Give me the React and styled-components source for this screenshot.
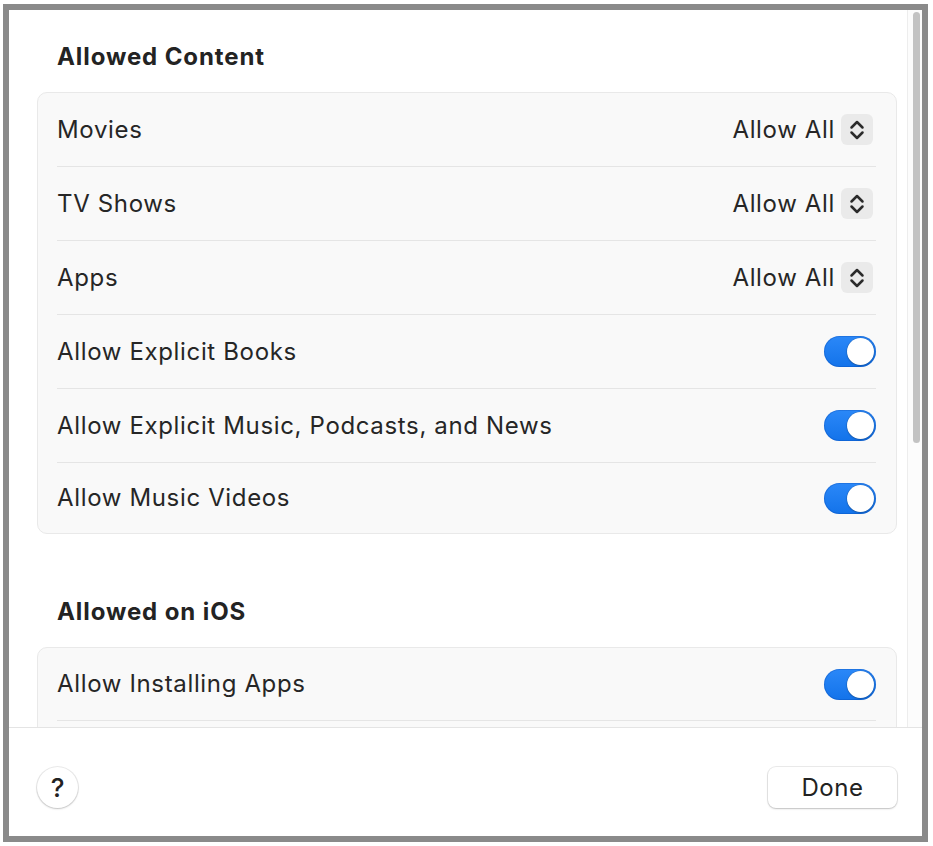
import React from "react";
import styled, { createGlobalStyle } from "styled-components";

const GlobalStyle = createGlobalStyle`
  html, body {
    margin: 0;
    padding: 0;
    background: #ffffff;
  }
  body {
    font-family: Inter, "Noto Sans", "Liberation Sans", sans-serif;
    color: #262626;
    -webkit-font-smoothing: antialiased;
  }
`;

const contentRows = [
  { label: "Movies", kind: "popup", value: "Allow All" },
  { label: "TV Shows", kind: "popup", value: "Allow All" },
  { label: "Apps", kind: "popup", value: "Allow All" },
  { label: "Allow Explicit Books", kind: "toggle" },
  { label: "Allow Explicit Music, Podcasts, and News", kind: "toggle" },
  { label: "Allow Music Videos", kind: "toggle" },
];

// the list goes on below the footer, only the first row is visible
const iosRows = [{ label: "Allow Installing Apps", kind: "toggle" }];

function Stepper() {
  return (
    <StepperBox>
      <svg width="22" height="24" viewBox="0 0 22 24" fill="none">
        <path
          d="M5.5 9.5 L11 4 L16.5 9.5 M5.5 14.5 L11 20 L16.5 14.5"
          stroke="#2b2b2b"
          strokeWidth="2.5"
          strokeLinecap="round"
          strokeLinejoin="round"
        />
      </svg>
    </StepperBox>
  );
}

function Row({ row }) {
  return (
    <RowWrap>
      <RowLabel>{row.label}</RowLabel>
      {row.kind === "popup" ? (
        <Popup>
          <PopupValue>{row.value}</PopupValue>
          <Stepper />
        </Popup>
      ) : (
        <Toggle>
          <Knob />
        </Toggle>
      )}
    </RowWrap>
  );
}

function Section({ title, rows, continues }) {
  return (
    <SectionWrap>
      <SectionTitle>{title}</SectionTitle>
      <Card $continues={continues}>
        {rows.map((r) => (
          <Row key={r.label} row={r} />
        ))}
      </Card>
    </SectionWrap>
  );
}

export default function App() {
  return (
    <>
      <GlobalStyle />
      <Frame>
        <ScrollArea>
          <Content>
            <Section title="Allowed Content" rows={contentRows} />
            <Section title="Allowed on iOS" rows={iosRows} continues />
          </Content>
          <ScrollTrack>
            <Thumb />
          </ScrollTrack>
        </ScrollArea>
        <Footer>
          <HelpButton>?</HelpButton>
          <DoneButton>Done</DoneButton>
        </Footer>
      </Frame>
    </>
  );
}

const Frame = styled.div`
  box-sizing: border-box;
  margin: 4px 5px 0 3px;
  height: 838px;
  border: 6px solid #8a8a8a;
  background: #ffffff;
  display: flex;
  flex-direction: column;
  overflow: hidden;
`;

const ScrollArea = styled.div`
  flex: 1;
  display: flex;
  min-height: 0;
  overflow: hidden;
`;

const Content = styled.div`
  flex: 1;
  padding: 32px 10px 0 28px;
  display: flex;
  flex-direction: column;
  gap: 63px;
`;

const ScrollTrack = styled.div`
  width: 14px;
  border-left: 1px solid #ededed;
  background: #fcfcfc;
  padding-top: 2px;
`;

const Thumb = styled.div`
  width: 7px;
  height: 431px;
  margin-left: 5px;
  border-radius: 4px;
  background: #c3c3c3;
`;

const SectionWrap = styled.section`
  display: flex;
  flex-direction: column;
  gap: 20px;
`;

const SectionTitle = styled.h2`
  margin: 0;
  padding-left: 20px;
  font-size: 24px;
  line-height: 30px;
  font-weight: 700;
  color: #232323;
  letter-spacing: 0.9px;
`;

const Card = styled.div`
  background: #f9f9f9;
  border: 1px solid #e9e9e9;
  border-radius: 10px;
  padding: 0 20px ${(p) => (p.$continues ? "60px" : "0")} 19px;

  & > div:last-child {
    border-bottom: ${(p) => (p.$continues ? "1px solid #e5e5e5" : "none")};
    height: ${(p) => (p.$continues ? "73px" : "70px")};
  }
`;

const RowWrap = styled.div`
  height: 74px;
  display: flex;
  align-items: center;
  justify-content: space-between;
  border-bottom: 1px solid #e5e5e5;
  box-sizing: border-box;
`;

const RowLabel = styled.span`
  font-size: 24px;
  line-height: 30px;
  color: #262626;
  letter-spacing: 0.65px;
`;

const Popup = styled.div`
  display: flex;
  align-items: center;
  gap: 6px;
  margin-right: 3px;
`;

const PopupValue = styled.span`
  font-size: 24px;
  line-height: 30px;
  color: #262626;
  letter-spacing: 0.65px;
`;

const StepperBox = styled.div`
  width: 32px;
  height: 31px;
  border-radius: 6px;
  background: #eaeaea;
  display: flex;
  align-items: center;
  justify-content: center;
`;

const Toggle = styled.div`
  box-sizing: border-box;
  width: 52px;
  height: 31px;
  border-radius: 16px;
  background: linear-gradient(180deg, #2b88f8 0%, #1373ea 100%);
  box-shadow: inset 0 0 0 1px rgba(0, 60, 160, 0.25);
  display: flex;
  align-items: center;
  justify-content: flex-end;
  padding: 0 2px;
`;

const Knob = styled.div`
  width: 27px;
  height: 27px;
  border-radius: 50%;
  background: #ffffff;
  box-shadow: 0 0 0 0.5px rgba(0, 0, 0, 0.15), 0 1px 2px rgba(0, 0, 0, 0.2);
`;

const Footer = styled.footer`
  height: 109px;
  box-sizing: border-box;
  border-top: 1px solid #e4e4e4;
  padding: 39px 25px 28px 28px;
  display: flex;
  align-items: flex-start;
  justify-content: space-between;
  background: #ffffff;
`;

const HelpButton = styled.button`
  width: 41px;
  height: 41px;
  border-radius: 50%;
  border: none;
  background: #ffffff;
  box-shadow: 0 0 0 1px rgba(0, 0, 0, 0.08), 0 1px 2px rgba(0, 0, 0, 0.18);
  font-family: Inter, "Liberation Sans", sans-serif;
  font-size: 26px;
  font-weight: 500;
  color: #222;
  display: flex;
  align-items: center;
  justify-content: center;
  padding: 0;
`;

const DoneButton = styled.button`
  width: 129px;
  height: 41px;
  border-radius: 8px;
  border: none;
  background: #ffffff;
  box-shadow: 0 0 0 1px rgba(0, 0, 0, 0.08), 0 1px 2px rgba(0, 0, 0, 0.18);
  font-family: Inter, "Liberation Sans", sans-serif;
  font-size: 24px;
  letter-spacing: 0.5px;
  color: #222;
  padding: 0;
`;
